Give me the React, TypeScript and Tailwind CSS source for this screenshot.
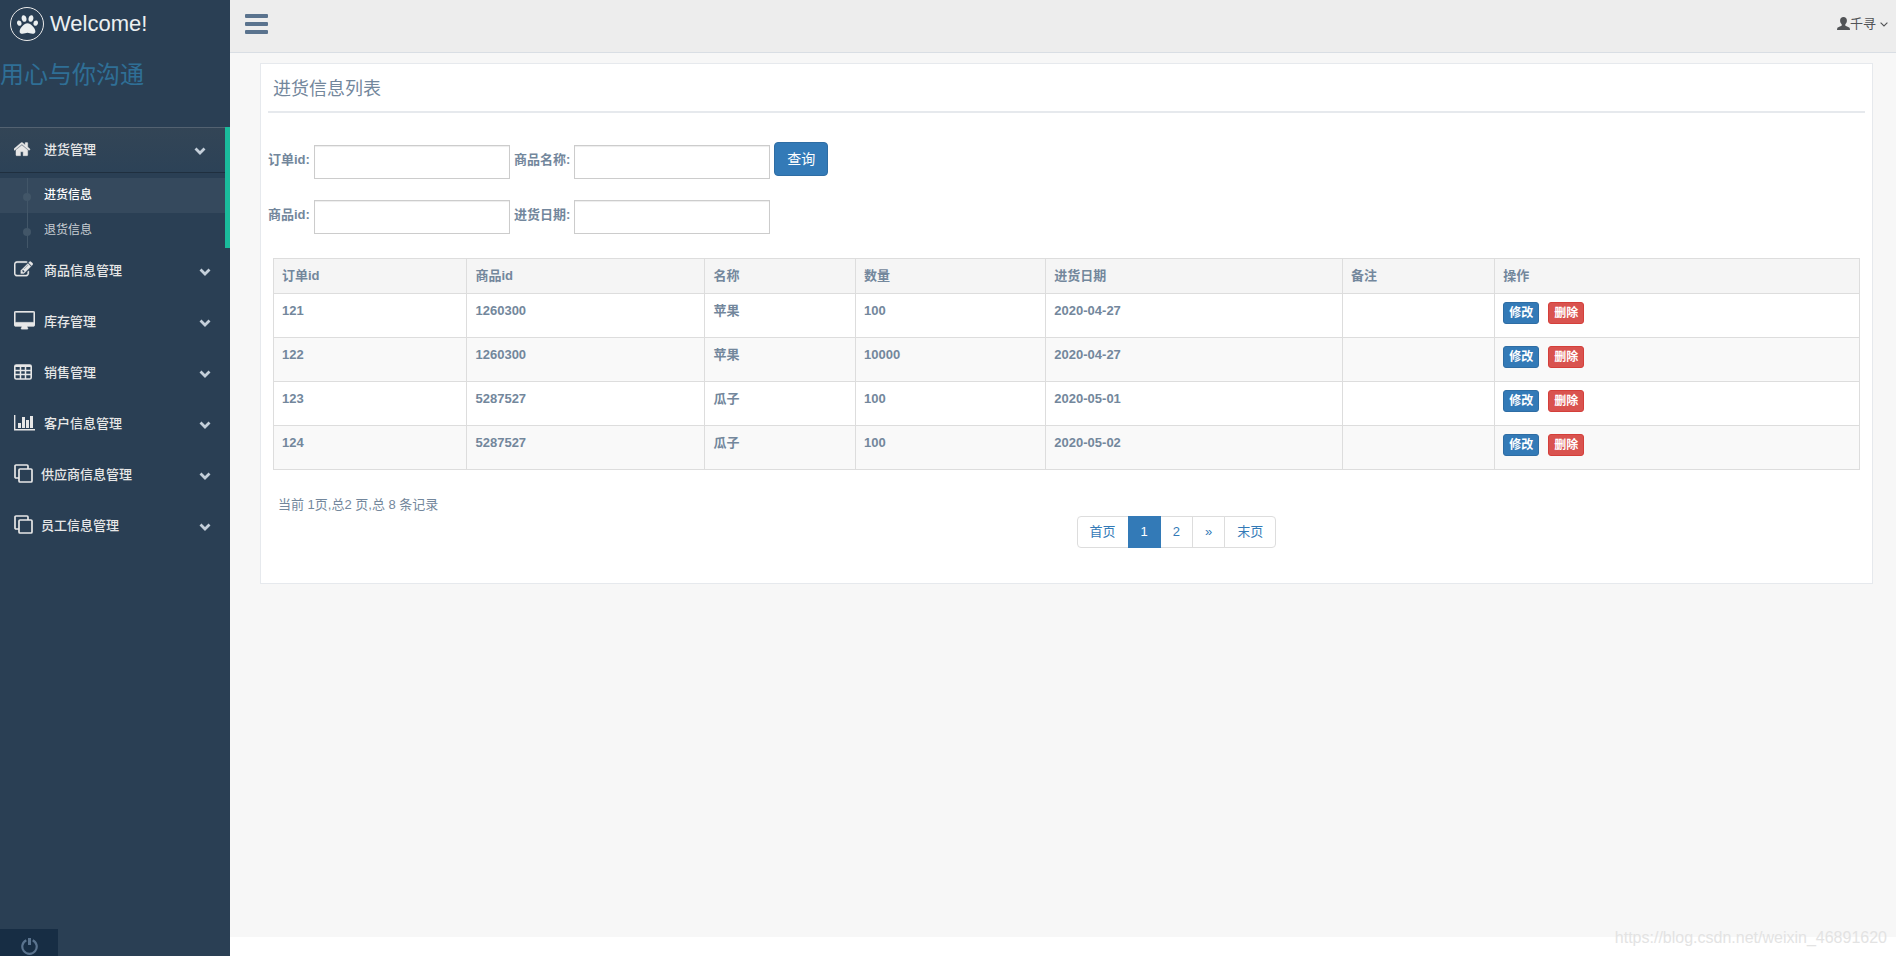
import { useState } from "react"
import type { ReactNode } from "react"
import { FaPaw } from "react-icons/fa"

const HomeIcon = () => (
  <svg viewBox="64 0 1664 1664" className="h-[17px] w-[17px]" fill="currentColor" stroke="currentColor" strokeWidth="40">
    <path d="M1408 992v480q0 26-19 45t-45 19h-384v-384h-256v384h-384q-26 0-45-19t-19-45v-480q0-1 .5-3t.5-3l575-474 575 474q1 2 1 6zm223-69l-62 74q-8 9-21 11h-3q-13 0-21-7l-692-577-692 577q-12 8-24 7-13-2-21-11l-62-74q-8-10-7-23.5t11-21.5l719-599q32-26 76-26t76 26l244 204v-195q0-14 9-23t23-9h192q14 0 23 9t9 23v408l219 182q10 8 11 21.5t-7 23.5z" />
  </svg>
)

const EditIcon = () => (
  <svg viewBox="0 0 1792 1792" className="h-[19px] w-[19px]" fill="currentColor" stroke="currentColor" strokeWidth="30">
    <path d="M888 1184l116-116-152-152-116 116v56h96v96h56zm440-720q-16-16-33 1l-350 350q-17 17-1 33t33-1l350-350q17-17 1-33zm80 594v190q0 119-84.5 203.5t-203.5 84.5h-832q-119 0-203.5-84.5t-84.5-203.5v-832q0-119 84.5-203.5t203.5-84.5h832q63 0 117 25 15 7 18 23 3 17-9 29l-49 49q-14 14-32 8-23-6-45-6h-832q-66 0-113 47t-47 113v832q0 66 47 113t113 47h832q66 0 113-47t47-113v-126q0-13 9-22l64-64q15-15 35-7t20 29zm-96-738l288 288-672 672h-288v-288zm444 132l-92 92-288-288 92-92q28-28 68-28t68 28l152 152q28 28 28 68t-28 68z" />
  </svg>
)

const DesktopIcon = () => (
  <svg viewBox="-64 0 1920 1728" className="h-[19px] w-[21px]" fill="currentColor" stroke="currentColor" strokeWidth="30">
    <path d="M1728 992v-832q0-13-9.5-22.5t-22.5-9.5h-1600q-13 0-22.5 9.5t-9.5 22.5v832q0 13 9.500 22.500t22.500 9.500h1600q13 0 22.500-9.500t9.500-22.500zm128-832v1088q0 66-47 113t-113 47h-544q0 37 16 77.500t32 71 16 43.500q0 26-19 45t-45 19h-512q-26 0-45-19t-19-45q0-14 16-44t32-70 16-78h-544q-66 0-113-47t-47-113v-1088q0-66 47-113t113-47h1600q66 0 113 47t47 113z" />
  </svg>
)

const TableIcon = () => (
  <svg viewBox="0 0 18 16" className="h-4 w-[18px]" fill="none" stroke="currentColor">
    <rect x="0.8" y="1" width="16.4" height="14" rx="1.5" strokeWidth="1.6" />
    <path d="M1 2h16" strokeWidth="2" />
    <path d="M1 6.500h16M1 10.500h16M6.500 3v12M11.500 3v12" strokeWidth="1.500" />
  </svg>
)

const ChartIcon = () => (
  <svg viewBox="0 0 21 17" className="h-[17px] w-[21px]" fill="currentColor">
    <path d="M0 1h1.400v14H21v1.600H0zM4 9h3v5H4zM8 3h3v11H8zM12 6h3v8h-3zM16 2h3v12h-3z" />
  </svg>
)

const CloneIcon = () => (
  <svg viewBox="0 0 19 19" className="h-[19px] w-[19px]" fill="none" stroke="currentColor" strokeWidth="1.700">
    <rect x="5" y="5" width="13" height="13" rx="1" />
    <path d="M5 14H2a1 1 0 0 1-1-1V2a1 1 0 0 1 1-1h11a1 1 0 0 1 1 1v3" />
  </svg>
)

const ChevronIcon = () => (
  <svg viewBox="0 0 12 12" className="mt-0.5 h-3 w-3 text-[#c4cfda]" fill="none" stroke="currentColor" strokeWidth="2.800">
    <path d="M1.500 3.500 6 8l4.500-4.500" />
  </svg>
)

const UserIcon = () => (
  <svg viewBox="0 0 13 13" className="mb-0.5 h-[13px] w-[13px]" fill="currentColor">
    <path d="M6.500 0C8.600 0 9.900 1.400 9.900 3.500 9.900 5.200 9.200 6.500 8.300 7.300V8.600C8.300 9.200 12 10 12.600 11.100 12.900 11.600 13 12.300 13 13H0C0 12.300.1 11.600.4 11.100 1 10 4.700 9.200 4.700 8.600V7.300C3.800 6.500 3.100 5.200 3.100 3.500 3.100 1.400 4.400 0 6.500 0Z" />
  </svg>
)

const PowerIcon = () => (
  <svg viewBox="0 0 17 17" className="h-[17px] w-[17px]" fill="none" stroke="currentColor">
    <path d="M5.300 2.200A7.200 7.200 0 1 0 11.700 2.200" strokeWidth="2.200" />
    <path d="M8.500 0V7" strokeWidth="3" />
  </svg>
)

type MenuItem = {
  name: string
  icon: ReactNode
  iconBox: string
  submenu?: string[]
}

const menuItems: MenuItem[] = [
  { name: "进货管理", icon: <HomeIcon />, iconBox: "w-[30px]", submenu: ["进货信息", "退货信息"] },
  { name: "商品信息管理", icon: <EditIcon />, iconBox: "w-[30px]" },
  { name: "库存管理", icon: <DesktopIcon />, iconBox: "w-[30px]" },
  { name: "销售管理", icon: <TableIcon />, iconBox: "w-[30px]" },
  { name: "客户信息管理", icon: <ChartIcon />, iconBox: "w-[30px]" },
  { name: "供应商信息管理", icon: <CloneIcon />, iconBox: "w-[27px]" },
  { name: "员工信息管理", icon: <CloneIcon />, iconBox: "w-[27px]" },
]

const columns = [
  { name: "订单id", width: "w-[12.2%]" },
  { name: "商品id", width: "w-[15%]" },
  { name: "名称", width: "w-[9.5%]" },
  { name: "数量", width: "w-[12%]" },
  { name: "进货日期", width: "w-[18.7%]" },
  { name: "备注", width: "w-[9.6%]" },
  { name: "操作", width: "w-[23%]" },
]

const orders = [
  { id: "121", goodsId: "1260300", name: "苹果", amount: "100", date: "2020-04-27" },
  { id: "122", goodsId: "1260300", name: "苹果", amount: "10000", date: "2020-04-27" },
  { id: "123", goodsId: "5287527", name: "瓜子", amount: "100", date: "2020-05-01" },
  { id: "124", goodsId: "5287527", name: "瓜子", amount: "100", date: "2020-05-02" },
]

const pages = ["首页", "1", "2", "»", "末页"]

function Sidebar() {
  const [activeSub, setActiveSub] = useState("进货信息")

  return (
    <aside className="sticky top-0 flex h-screen w-[230px] shrink-0 flex-col bg-[#2A3F54]">
      <a href="#" className="flex h-[57px] items-start gap-1.5 pt-[7px] pl-2.5 text-[22px] leading-[34px] text-[#ECF0F1]">
        <span className="flex h-[34px] w-[34px] items-center justify-center rounded-full border border-[#EAEAEA]">
          <FaPaw className="h-[21px] w-[21px]" />
        </span>
        Welcome!
      </a>
      <h2 className="mb-[34px] text-2xl leading-9 text-[#2f6f96]">用心与你沟通</h2>

      <nav className="flex-1">
        <ul>
          {menuItems.map((item) =>
            item.submenu ? (
              <li key={item.name} className="border-r-[5px] border-[#1ABB9C]">
                <a
                  href="#"
                  className="mb-1.5 flex h-[45px] items-center bg-linear-to-b from-[#334556] to-[#2C4257] pr-[19px] pl-3.5 text-[13px] font-medium text-[#E7E7E7] shadow-[0_1px_0_rgba(0,0,0,0.25),inset_0_1px_0_rgba(255,255,255,0.16)]"
                >
                  <span className={`pb-0.5 ${item.iconBox}`}>{item.icon}</span>
                  <span className="flex-1">{item.name}</span>
                  <ChevronIcon />
                </a>
                <ul>
                  {item.submenu.map((sub) => (
                    <li key={sub} className={`relative ${activeSub === sub ? "bg-white/5" : ""}`}>
                      <span className="absolute inset-y-0 left-[27px] w-px bg-[#425668]" />
                      <span className="absolute top-[15px] left-[23px] h-2 w-2 rounded-full bg-[#425668]" />
                      <a
                        href="#"
                        onClick={() => setActiveSub(sub)}
                        className={`block pl-11 text-xs leading-[35px] ${
                          activeSub === sub ? "font-medium text-white" : "text-white/75"
                        }`}
                      >
                        {sub}
                      </a>
                    </li>
                  ))}
                </ul>
              </li>
            ) : (
              <li key={item.name} className="mb-1.5">
                <a href="#" className="flex h-[45px] items-center pr-[19px] pl-3.5 text-[13px] font-medium text-[#E7E7E7]">
                  <span className={`pb-0.5 ${item.iconBox}`}>{item.icon}</span>
                  <span className="flex-1">{item.name}</span>
                  <ChevronIcon />
                </a>
              </li>
            )
          )}
        </ul>
      </nav>

      <button aria-label="退出" className="flex w-[58px] justify-center bg-[#172D44] pt-[9px] pb-px text-[#5A738E]">
        <PowerIcon />
      </button>
    </aside>
  )
}

function Topbar() {
  return (
    <header className="flex h-[53px] items-start justify-between border-b border-[#D9DEE4] bg-[#EDEDED] pr-2 pl-[15px]">
      <button aria-label="菜单" className="mt-3.5 flex flex-col gap-[3px] text-[#5A738E]">
        <span className="h-[4px] w-[23px] rounded-[1px] bg-current" />
        <span className="my-px h-[4px] w-[23px] rounded-[1px] bg-current" />
        <span className="h-[4px] w-[23px] rounded-[1px] bg-current" />
      </button>
      <a href="#" className="mt-3.5 flex items-center text-[13px] leading-5 text-[#515356]">
        <UserIcon />
        千寻
        <svg viewBox="0 0 8 5" className="ml-1 h-[5px] w-2" fill="none" stroke="currentColor" strokeWidth="1.1">
          <path d="M.6.6 4 4 7.4.6" />
        </svg>
      </a>
    </header>
  )
}

function Field({ id, label }: { id: string; label: string }) {
  return (
    <div className="flex items-start gap-1">
      <label htmlFor={id} className="leading-[30px] font-bold">
        {label}
      </label>
      <input
        id={id}
        type="text"
        className="h-[34px] w-[196px] border border-[#ccc] bg-white px-3 shadow-[inset_0_1px_1px_rgba(0,0,0,0.075)] outline-none"
      />
    </div>
  )
}

function OrderTable() {
  return (
    <table className="w-full table-fixed border-collapse text-left font-bold">
      <thead>
        <tr className="bg-[#F5F5F5]">
          {columns.map((col) => (
            <th key={col.name} className={`h-[35px] border border-[#ddd] px-2 ${col.width}`}>
              {col.name}
            </th>
          ))}
        </tr>
      </thead>
      <tbody>
        {orders.map((order) => (
          <tr key={order.id} className="even:bg-[#F9F9F9]">
            <td className="h-11 border border-[#ddd] p-2 align-top">{order.id}</td>
            <td className="border border-[#ddd] p-2 align-top">{order.goodsId}</td>
            <td className="border border-[#ddd] p-2 align-top">{order.name}</td>
            <td className="border border-[#ddd] p-2 align-top">{order.amount}</td>
            <td className="border border-[#ddd] p-2 align-top">{order.date}</td>
            <td className="border border-[#ddd] p-2 align-top"></td>
            <td className="border border-[#ddd] px-2 pt-2 align-top">
              <div className="flex gap-[9px] text-xs leading-[18px] text-white">
                <button className="rounded-[3px] border border-[#2e6da4] bg-[#337ab7] px-[5px] py-px">修改</button>
                <button className="rounded-[3px] border border-[#d43f3a] bg-[#d9534f] px-[5px] py-px">删除</button>
              </div>
            </td>
          </tr>
        ))}
      </tbody>
    </table>
  )
}

function Pagination() {
  return (
    <ul className="mt-5 flex">
      {pages.map((page) => (
        <li key={page} className="group -ml-px first:ml-0">
          <a
            href="#"
            className={`block border px-3 py-1.5 group-first:rounded-l group-last:rounded-r ${
              page === "1" ? "relative border-[#337ab7] bg-[#337ab7] text-white" : "border-[#ddd] bg-white text-[#337ab7]"
            }`}
          >
            {page}
          </a>
        </li>
      ))}
    </ul>
  )
}

export default function App() {
  return (
    <div className="relative flex min-h-screen bg-white font-['Liberation_Sans','Noto_Sans_CJK_SC',sans-serif] text-[13px] leading-[18px] text-[#73879C]">
      <Sidebar />

      <div className="flex min-w-0 flex-1 flex-col pb-[19px]">
        <Topbar />
        <main className="flex-1 bg-[#F7F7F7] pt-2.5 pr-[23px] pb-2.5 pl-[30px]">
          <section className="border border-[#E6E9ED] bg-white px-[7px] pt-[11px] pb-[35px]">
            <h2 className="border-b-2 border-[#E6E9ED] px-[5px] pb-2 text-lg leading-7">进货信息列表</h2>

            <form className="mt-[29px]" onSubmit={(e) => e.preventDefault()}>
              <div className="flex items-start gap-1">
                <div className="flex gap-1 pt-[3px]">
                  <Field id="orderId" label="订单id:" />
                  <Field id="goodsName" label="商品名称:" />
                </div>
                <button className="rounded border border-[#2e6da4] bg-[#337ab7] px-3 py-1.5 text-sm text-white">查询</button>
              </div>
              <div className="mt-[21px] flex gap-1">
                <Field id="goodsId" label="商品id:" />
                <Field id="orderDate" label="进货日期:" />
              </div>
            </form>

            <div className="mt-6 px-[5px]">
              <OrderTable />
            </div>

            <div className="mt-[26px] flex">
              <p className="w-1/2 pl-2.5">当前 1页,总2 页,总 8 条记录</p>
              <div className="w-1/2 pl-2.5">
                <Pagination />
              </div>
            </div>
          </section>
        </main>
      </div>

      <span className="absolute right-[9px] bottom-2 text-base leading-5 text-[#E3E3E3]">
        https://blog.csdn.net/weixin_46891620
      </span>
    </div>
  )
}
